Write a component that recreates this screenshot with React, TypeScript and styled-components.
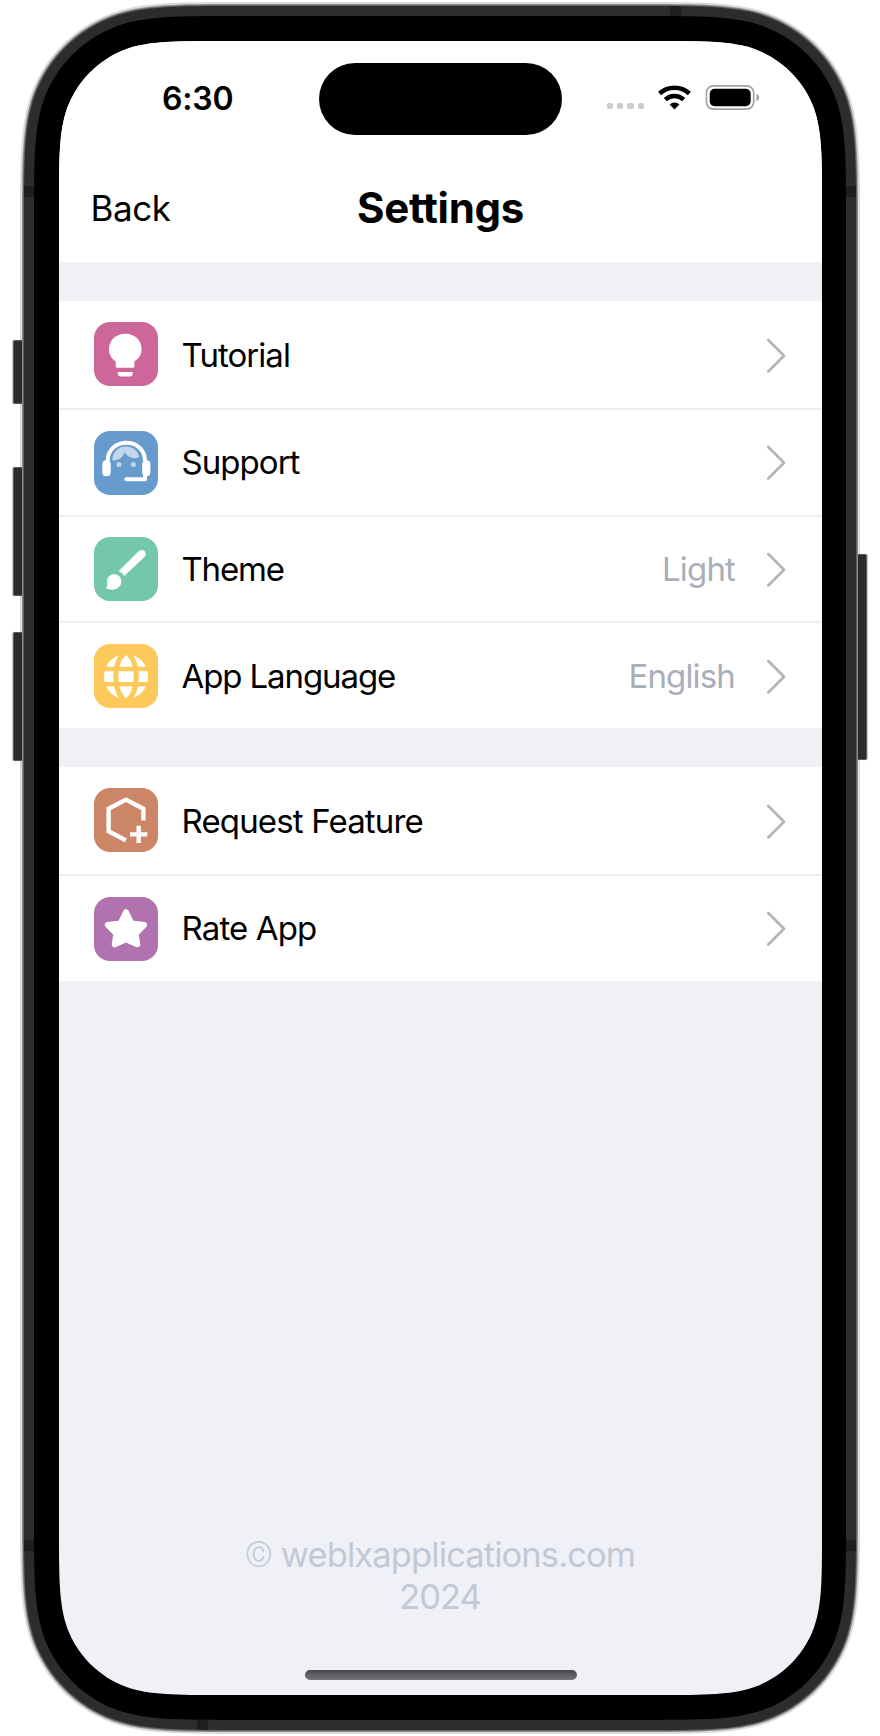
import React from "react";
import styled, { createGlobalStyle } from "styled-components";

const Global = createGlobalStyle`
  * { box-sizing: border-box; }
  body { margin: 0; background: #fff; font-family: Inter, "Liberation Sans", sans-serif; color: #000; }
`;

/* Rounded rectangle with continuous-curvature corners, as a CSS path. */
function squircle(w: number, h: number, r: number) {
  const [a, b, c, d, e, f, g] = [1.528665, 1.088493, 0.848, 0.631494, 0.372824, 0.16906, 0.074911].map((k) => k * r);
  return (
    `M${a} 0L${w - a} 0C${w - b} 0 ${w - c} 0 ${w - d} ${g}C${w - e} ${f} ${w - f} ${e} ${w - g} ${d}C${w} ${c} ${w} ${b} ${w} ${a}` +
    `L${w} ${h - a}C${w} ${h - b} ${w} ${h - c} ${w - g} ${h - d}C${w - f} ${h - e} ${w - e} ${h - f} ${w - d} ${h - g}C${w - c} ${h} ${w - b} ${h} ${w - a} ${h}` +
    `L${a} ${h}C${b} ${h} ${c} ${h} ${d} ${h - g}C${e} ${h - f} ${f} ${h - e} ${g} ${h - d}C0 ${h - c} 0 ${h - b} 0 ${h - a}` +
    `L0 ${a}C0 ${b} 0 ${c} ${g} ${d}C${f} ${e} ${e} ${f} ${d} ${g}C${c} 0 ${b} 0 ${a} 0Z`
  );
}

const Stage = styled.main`
  position: relative;
  width: 880px;
  height: 1736px;
  padding: 2px 0 0 20px;
  overflow: hidden;
`;

const Shell = styled.div<{ $w: number; $h: number; $r: number; $color: string; $pad: string }>`
  position: relative;
  width: ${(p) => p.$w}px;
  height: ${(p) => p.$h}px;
  padding: ${(p) => p.$pad};
  background: ${(p) => p.$color};
  clip-path: path("${(p) => squircle(p.$w, p.$h, p.$r)}");
`;

const SideButton = styled.i<{ $side: "left" | "right"; $top: number; $height: number }>`
  position: absolute;
  ${(p) => p.$side}: 13px;
  top: ${(p) => p.$top}px;
  width: 9px;
  height: ${(p) => p.$height}px;
  border: 1px solid #5c5c5c;
  border-${(p) => (p.$side === "left" ? "right" : "left")}: 0;
  border-radius: ${(p) => (p.$side === "left" ? "2px 0 0 2px" : "0 2px 2px 0")};
  background: #2c2c2c;
  box-shadow: ${(p) => (p.$side === "left" ? "-1px" : "1px")} 0 1px #c4c4c4;
`;

const Band = styled.i<{ $x: number; $y: number; $vertical?: boolean }>`
  position: absolute;
  left: ${(p) => p.$x}px;
  top: ${(p) => p.$y}px;
  width: ${(p) => (p.$vertical ? 11 : 10)}px;
  height: ${(p) => (p.$vertical ? 10 : 11)}px;
  background: #1e1e1e;
`;

const Screen = styled.div`
  display: flex;
  flex-direction: column;
  width: 763px;
  height: 1654px;
  background: #f0f1f7;
  clip-path: path("${squircle(763, 1654, 107)}");
`;

const StatusBar = styled.div`
  display: grid;
  grid-template-columns: 260px 243px 260px;
  align-items: start;
  height: 108px;
  padding-top: 21px;
  background: #fff;
`;

const Clock = styled.time`
  padding: 16.5px 0 0 103px;
  font-size: 32px;
  line-height: 40px;
  font-weight: 600;
  letter-spacing: -0.2px;
`;

const Island = styled.div`
  height: 72px;
  margin-top: 0.5px;
  border-radius: 36px;
  background: #000;
`;

const Indicators = styled.div`
  display: flex;
  align-items: center;
  padding: 23px 0 0 44.6px;
`;

const Signal = styled.div`
  display: flex;
  gap: 4px;
  margin: 16.5px 14px 0 0;
`;

const Dot = styled.i`
  width: 6.4px;
  height: 6.4px;
  border-radius: 2px;
  background: #ccc;
`;

const WifiGlyph = styled.svg`
  margin-right: 14px;
`;

const NavBar = styled.header`
  display: grid;
  grid-template-columns: 1fr auto 1fr;
  align-items: center;
  height: 113px;
  padding: 5px 31.5px 0 31.5px;
  background: #fff;
`;

const BackButton = styled.button`
  justify-self: start;
  padding: 0;
  border: 0;
  background: none;
  font: 400 35px/44px Inter, sans-serif;
  letter-spacing: -0.4px;
  color: #000;
`;

const Title = styled.h1`
  margin: 0;
  font-size: 42px;
  line-height: 50px;
  font-weight: 700;
  letter-spacing: -0.3px;
`;

const Group = styled.section`
  margin-top: 39px;
  background: #fff;
`;

const Tile = styled.svg<{ $color: string }>`
  width: 64px;
  height: 64px;
  margin-top: 0.6px;
  border-radius: 16px;
  background: ${(p) => p.$color};
`;

const Row = styled.div`
  display: flex;
  align-items: center;
  height: 106.7px;
  padding: 0 36px 0 35px;
  border-top: 2px solid #eeeff6;
  &:first-child {
    height: 107px;
    border-top: 0;
  }
  &:first-child > ${Tile} {
    margin: 0 0 1px;
  }
`;

const Label = styled.span<{ $tracking: number }>`
  flex: 1;
  margin-left: 23.5px;
  font-size: 33px;
  line-height: 40px;
  letter-spacing: ${(p) => p.$tracking}px;
`;

const Value = styled.span`
  margin-right: 31px;
  font-size: 33px;
  line-height: 40px;
  letter-spacing: -0.85px;
  color: #a9aebb;
`;

const Footer = styled.footer`
  margin-top: auto;
  padding: 0 1px 51.5px 0;
  text-align: center;
  font-size: 34.5px;
  line-height: 42px;
  letter-spacing: -0.9px;
  color: #c3c8d4;
`;

const Mark = styled.span`
  font-family: Roboto, sans-serif;
  font-weight: 300;
  font-size: 35px;
  line-height: 1;
`;

const HomeBar = styled.div`
  align-self: center;
  width: 272px;
  height: 10px;
  margin-bottom: 15.5px;
  border-radius: 5px;
  background: linear-gradient(#46484a, #747578);
`;

const Chevron = () => (
  <svg width="20" height="36" viewBox="0 0 20 36" fill="none" stroke="#b0b5be" strokeWidth="2.7" strokeLinecap="round" strokeLinejoin="round">
    <path d="M2.3 3 18 18.8 2.3 34.5" />
  </svg>
);

const Wifi = () => (
  <WifiGlyph width="33" height="26" viewBox="0 0 33 26">
    <g fill="none" stroke="#000" strokeWidth="4.5">
      <path d="M1.6 8.5A22 22 0 0 1 31.4 8.5" />
      <path d="M7.3 14.6A13.4 13.4 0 0 1 25.7 14.6" />
    </g>
    <path d="M16.5 24.4 11.6 19.5A7 7 0 0 1 21.4 19.5Z" />
  </WifiGlyph>
);

const Battery = () => (
  <svg width="56" height="26" viewBox="0 0 56 26">
    <rect x="1.4" y="0.9" width="47.3" height="23.2" rx="7" fill="none" stroke="#a3a3a3" strokeWidth="1.7" />
    <rect x="4.7" y="3.8" width="41" height="17.4" rx="5" />
    <path d="M51.4 8.8Q54.2 9.8 54.2 12.5T51.4 16.2Z" fill="#a3a3a3" />
  </svg>
);

const Bulb = (
  <g fill="#fff">
    <path d="M31.3 11.7C40.5 11.7 47.6 18 47.6 27.2C47.6 32.6 44.8 36.5 40.4 39.2V44.2Q40.4 45.7 38.9 45.7H23.2Q21.7 45.7 21.7 44.2V39.2C17.6 36.5 15 32.6 15 27.2C15 18 22.1 11.7 31.3 11.7Z" />
    <path d="M23.8 50H38.7V51.3Q38.7 54.4 35.7 54.4H26.8Q23.8 54.4 23.8 51.3Z" />
  </g>
);

const Headset = (
  <g>
    <path d="M18.3 29.5C18.8 20 25 15.6 32 15.6C38 15.6 43.5 19 45.3 26C40 29 33.2 26.4 30.3 20.5C30 25.5 25 30 18.3 29.5Z" fill="#c3d7ea" />
    <circle cx="25" cy="33.4" r="2.5" fill="#c3d7ea" />
    <circle cx="39.4" cy="33.4" r="2.5" fill="#c3d7ea" />
    <path d="M13.7 31V29.5C13.7 19 22 11.7 32.3 11.7S51 19 51 29.5V48.3H32.3" fill="none" stroke="#fff" strokeWidth="4" strokeLinecap="round" strokeLinejoin="round" />
    <rect x="8.3" y="29.3" width="8.4" height="16" rx="4" fill="#fff" />
    <rect x="48.2" y="29.3" width="8.2" height="16" rx="4" fill="#fff" />
  </g>
);

const Brush = (
  <g fill="#fff">
    <path d="M24.7 34 44.7 14.3Q48 11.6 50.8 14.2Q53 17 50.4 20L30.3 39Q28.4 35.7 24.7 34Z" />
    <path d="M11.6 51C14.2 49.8 12.9 47 13.1 44.2C13.3 40 16.4 37.3 20 37.3C24.3 37.3 27.3 40.3 27.3 44.2C27.3 52 18.2 54.8 11.6 51Z" />
  </g>
);

const globeCap = (
  <>
    <path d="M25.4 22.7C26.7 17.7 29 13.2 32 11C35 13.2 37.3 17.7 38.6 22.7Z" />
    <path d="M12.2 22.7C14.6 17.2 19.3 13.2 25 11.4C22.5 14.6 20.9 18.5 20.2 22.7Z" />
    <path d="M51.8 22.7C49.4 17.2 44.7 13.2 39 11.4C41.5 14.6 43.1 18.5 43.8 22.7Z" />
  </>
);

const Globe = (
  <g fill="#fff">
    {globeCap}
    <g transform="matrix(1 0 0 -1 0 65.2)">{globeCap}</g>
    <path d="M10.6 27.3H19.6Q18.8 32.5 19.6 38H10.6Q9.3 32.5 10.6 27.3ZM24.7 27.3H39.3Q40 32.5 39.3 38H24.7Q24 32.5 24.7 27.3ZM44.4 27.3H53.4Q54.7 32.5 53.4 38H44.4Q45.2 32.5 44.4 27.3Z" />
  </g>
);

const HexPlus = (
  <path d="M49.4 32.5V20.8L32 11.6 14.6 20.8V43.3L31.9 52.4M44.7 37.7V55M36 46.4H53.3" fill="none" stroke="#fff" strokeWidth="4.4" strokeLinejoin="round" />
);

const Star = (
  <path d="M32 15.2 37.3 26.4 50.1 28 41.6 36.6 43.3 47.3 32 42.2 20.7 47.3 22.4 36.6 13.9 28 26.7 26.4Z" fill="#fff" stroke="#fff" strokeWidth="6" strokeLinejoin="round" />
);

type Item = { label: string; tracking: number; color: string; icon: React.ReactNode; value?: string };

const groups: Item[][] = [
  [
    { label: "Tutorial", tracking: -0.95, color: "#ce6799", icon: Bulb },
    { label: "Support", tracking: -0.95, color: "#689bcd", icon: Headset },
    { label: "Theme", tracking: -1.2, color: "#74c8aa", icon: Brush, value: "Light" },
    { label: "App Language", tracking: -1.1, color: "#fdc95b", icon: Globe, value: "English" },
  ],
  [
    { label: "Request Feature", tracking: -0.85, color: "#cc8567", icon: HexPlus },
    { label: "Rate App", tracking: -0.85, color: "#b173b0", icon: Star },
  ],
];

export default function App() {
  return (
    <Stage>
      <Global />
      <Shell $w={840} $h={1732} $r={146} $color="#d9d9d9" $pad="2px">
        <Shell $w={836} $h={1728} $r={144} $color="#8c8c8c" $pad="1px">
          <Shell $w={834} $h={1726} $r={143} $color="#606060" $pad="1px">
            <Shell $w={832} $h={1724} $r={142} $color="#2c2c2c" $pad="10px">
              <Band $x={646} $y={0} $vertical />
              <Band $x={173} $y={1714} $vertical />
              <Band $x={0} $y={180} />
              <Band $x={822} $y={180} />
              <Band $x={0} $y={1534} />
              <Band $x={822} $y={1534} />
              <Shell $w={812} $h={1704} $r={132} $color="#000" $pad="25px">
                <Screen>
                  <StatusBar>
                    <Clock>6:30</Clock>
                    <Island />
                    <Indicators>
                      <Signal><Dot /><Dot /><Dot /><Dot /></Signal>
                      <Wifi />
                      <Battery />
                    </Indicators>
                  </StatusBar>
                  <NavBar>
                    <BackButton>Back</BackButton>
                    <Title>Settings</Title>
                  </NavBar>
                  {groups.map((items, i) => (
                    <Group key={i}>
                      {items.map((it) => (
                        <Row key={it.label}>
                          <Tile viewBox="0 0 64 64" $color={it.color}>{it.icon}</Tile>
                          <Label $tracking={it.tracking}>{it.label}</Label>
                          {it.value && <Value>{it.value}</Value>}
                          <Chevron />
                        </Row>
                      ))}
                    </Group>
                  ))}
                  <Footer>
                    <Mark>©</Mark> weblxapplications.com
                    <br />
                    2024
                  </Footer>
                  <HomeBar />
                </Screen>
              </Shell>
            </Shell>
          </Shell>
        </Shell>
      </Shell>
      <SideButton $side="left" $top={340} $height={64} />
      <SideButton $side="left" $top={467} $height={129} />
      <SideButton $side="left" $top={632} $height={129} />
      <SideButton $side="right" $top={554} $height={206} />
    </Stage>
  );
}
